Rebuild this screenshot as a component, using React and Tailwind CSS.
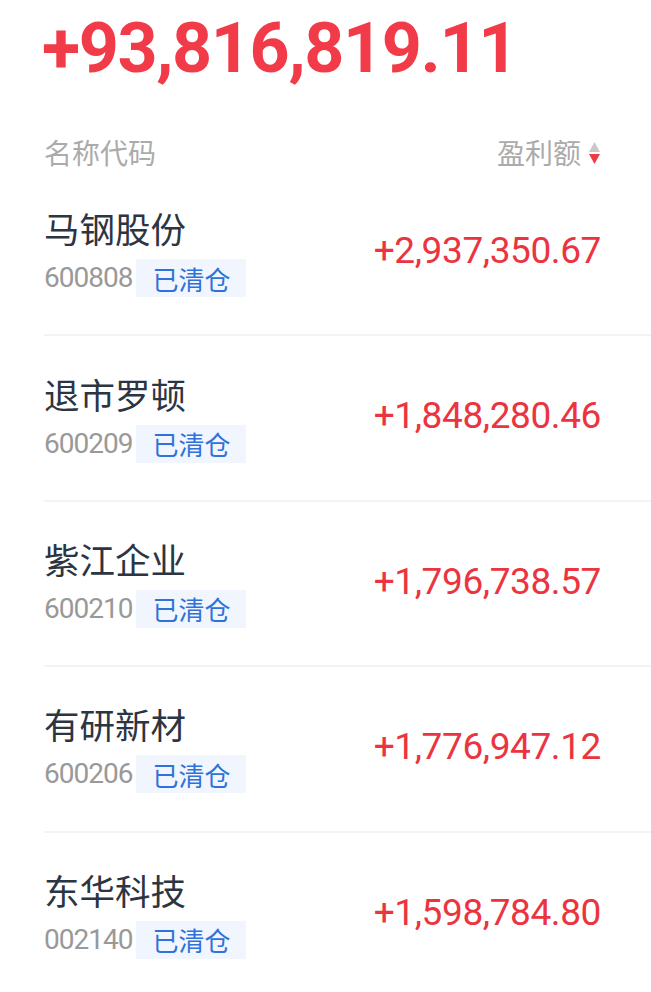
import React from 'react';

const rows = [
  { name: '马钢股份', code: '600808', amount: '+2,937,350.67' },
  { name: '退市罗顿', code: '600209', amount: '+1,848,280.46' },
  { name: '紫江企业', code: '600210', amount: '+1,796,738.57' },
  { name: '有研新材', code: '600206', amount: '+1,776,947.12' },
  { name: '东华科技', code: '002140', amount: '+1,598,784.80' },
];

const cjk = '"Noto Sans CJK SC", sans-serif';
const num = 'Roboto, "Noto Sans", sans-serif';

function SortIcon() {
  return (
    <svg width="13" height="24" viewBox="0 0 13 24" className="ml-[7px]">
      <path d="M6.5 2 L12 12 L1 12 Z" fill="#c9c9c9" />
      <path d="M1 14 L12 14 L6.5 24 Z" fill="#f03a46" />
    </svg>
  );
}

export default function App() {
  return (
    <div className="w-[651px] h-[992px] overflow-hidden bg-white">
      <div
        className="pl-[42px] pt-[13px] h-[83px] text-[70px] leading-[70px] font-bold text-[#f23b48] tracking-[-1.4px]"
        style={{ fontFamily: num }}
      >
        +93,816,819.11
      </div>

      <div className="flex items-center justify-between pl-[44px] pr-[50px] mt-[50px] h-[38px]">
        <span className="text-[28px] leading-[38px] text-[#ababab]" style={{ fontFamily: cjk }}>名称代码</span>
        <span className="flex items-center">
          <span className="text-[28px] leading-[38px] text-[#ababab]" style={{ fontFamily: cjk }}>盈利额</span>
          <SortIcon />
        </span>
      </div>

      <div className="pl-[44px]">
        {rows.map((r) => (
          <div key={r.code} className="flex items-center justify-between h-[165.4px] pr-[50px] border-b-2 border-[#f3f3f3]">
            <div className="flex flex-col">
              <div className="text-[35.5px] leading-[44px] text-[#2c3542]" style={{ fontFamily: cjk }}>{r.name}</div>
              <div className="flex items-center mt-[7px]">
                <span className="text-[28px] text-[#999999] tracking-[-1px]" style={{ fontFamily: num }}>{r.code}</span>
                <span
                  className="ml-[4px] h-[38px] px-[16px] flex items-center bg-[#f1f6fe] text-[26px] text-[#2f72da]"
                  style={{ fontFamily: cjk }}
                >
                  已清仓
                </span>
              </div>
            </div>
            <div
              className="text-[37px] font-normal text-[#ec3440] tracking-[-0.4px] -mt-[4px]"
              style={{ fontFamily: num }}
            >
              {r.amount}
            </div>
          </div>
        ))}
      </div>
    </div>
  );
}
